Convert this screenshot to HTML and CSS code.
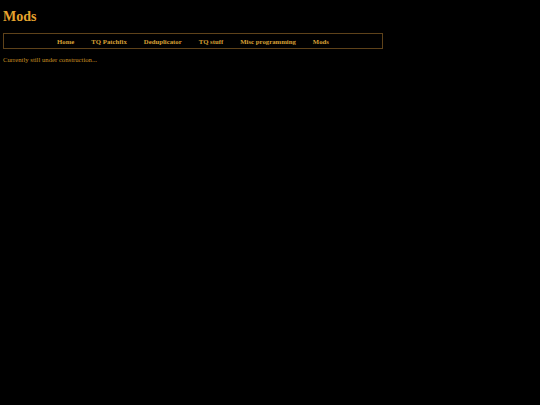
FILE: index.html
```html
<!DOCTYPE html>
<html>
<head>
<meta charset="utf-8">
<title>Mods</title>
<link rel="stylesheet" href="styles.css">
</head>
<body>
<h1 class="title">Mods</h1>
<nav class="nav">
  <a class="nav-link" href="#">Home</a>
  <a class="nav-link" href="#">TQ Patchfix</a>
  <a class="nav-link" href="#">Deduplicator</a>
  <a class="nav-link" href="#">TQ stuff</a>
  <a class="nav-link" href="#">Misc programming</a>
  <a class="nav-link" href="#">Mods</a>
</nav>
<p class="text">Currently still under construction...</p>
</body>
</html>
```
FILE: styles.css
```css
html, body {
  background: #000;
}
body {
  margin: 0;
  padding: 4px 3px;
  width: 380px;
  font-family: "Liberation Serif", "Times New Roman", serif;
  color: #d8951f;
}
.title {
  margin: 6px 0 9px;
  font-size: 14px;
  line-height: 14px;
  font-weight: bold;
  color: #e6a32e;
}
.nav {
  display: flex;
  justify-content: center;
  gap: 17px;
  border: 1px solid #5e421a;
  height: 14px;
  align-items: center;
}
.nav-link {
  font-size: 6.75px;
  font-weight: bold;
  color: #d8a035;
  text-decoration: none;
}
.text {
  margin: 7px 0 0;
  font-size: 6.7px;
  color: #c89022;
}
```
